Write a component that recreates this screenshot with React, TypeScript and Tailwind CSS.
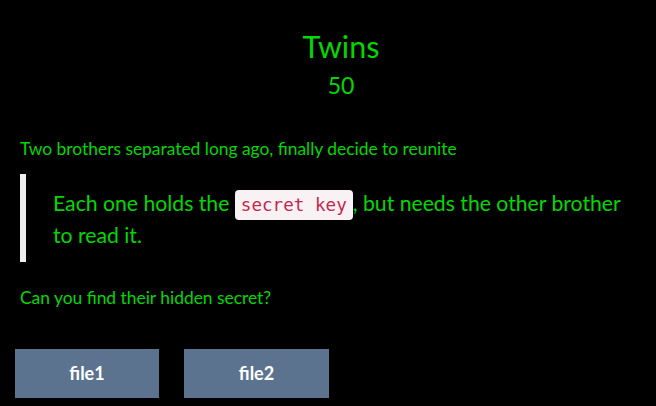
import React from "react";

export default function App() {
  return (
    <div className="w-[656px] h-[406px] bg-black overflow-hidden text-[#00d800]" style={{ fontFamily: "Lato, 'Noto Sans', sans-serif" }}>
      <div className="pt-[27px] pl-[26px] text-center">
        <h1 className="text-[30.5px] leading-[38px]">Twins</h1>
        <h2 className="text-[23px] leading-[28px] mt-[6px]">50</h2>
      </div>
      <div className="px-[20px]">
        <p className="mt-[38px] text-[17.4px] leading-[24px]">Two brothers separated long ago, finally decide to reunite</p>
        <blockquote className="mt-[13px] border-l-[6px] border-[#eeeeee] pl-[27px] pr-[4px] pt-[13px] pb-[11px] text-[21.2px] leading-[32px]">
          Each one holds the{" "}
          <code className="bg-[#f9f2f4] text-[#c7254e] rounded-[4px] px-[6px] py-[5px] text-[17.6px] leading-none" style={{ fontFamily: "'DejaVu Sans Mono', monospace" }}>secret key</code>, but needs the other brother to read it.
        </blockquote>
        <p className="mt-[24px] text-[17.4px] leading-[24px]">Can you find their hidden secret?</p>
      </div>
      <div className="flex gap-[25px] pl-[15px] mt-[39px]">
        <button className="w-[144px] h-[49px] bg-[#5c7390] text-white font-bold text-[18px]">file1</button>
        <button className="w-[145px] h-[49px] bg-[#5c7390] text-white font-bold text-[18px]">file2</button>
      </div>
    </div>
  );
}
